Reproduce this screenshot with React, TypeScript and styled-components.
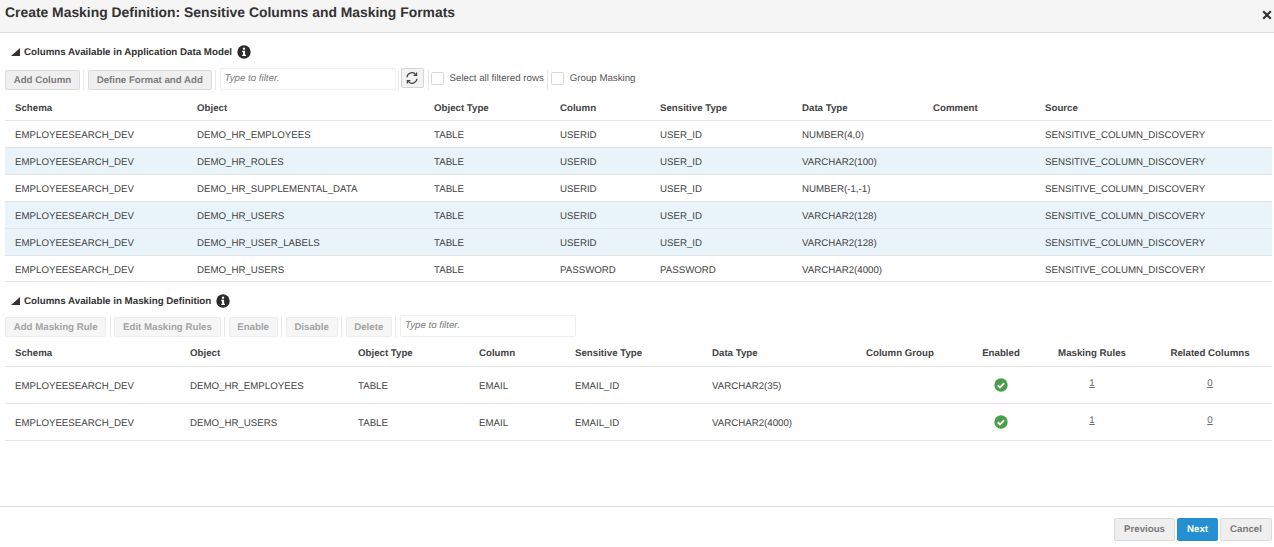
import { createGlobalStyle, styled } from "styled-components";

const GlobalStyle = createGlobalStyle`
  html, body {
    margin: 0;
    padding: 0;
    background: #fff;
    font-family: "Liberation Sans", Arial, sans-serif;
    color: #333;
    text-rendering: geometricPrecision;
  }
  button, input {
    text-rendering: geometricPrecision;
  }
`;

const Dialog = styled.div`
  width: 1274px;
  height: 547px;
  display: flex;
  flex-direction: column;
  overflow: hidden;
  background: #fff;
`;
const Header = styled.header`
  flex: none;
  height: 33px;
  box-sizing: border-box;
  display: flex;
  justify-content: space-between;
  background: #f5f5f5;
  border-bottom: 1px solid #dfdfdf;
  padding: 4px 2px 0 5px;
`;
const Title = styled.h1`
  margin: 0;
  font-size: 13.9px;
  line-height: 17px;
  font-weight: 700;
  color: #333;
`;
const Close = styled.svg`
  margin-top: 6px;
`;
const Body = styled.main`
  flex: 1;
  padding: 0 2px 0 5px;
  min-height: 0;
`;
const SectionTitle = styled.div<{ $top: number }>`
  display: flex;
  align-items: center;
  height: 16px;
  padding-left: 6px;
  margin-top: ${({ $top }) => $top}px;
  font-size: 9.75px;
  font-weight: 700;
  color: #333;
`;
const Triangle = styled.span`
  width: 0;
  height: 0;
  margin-right: 4px;
  border-left: 9px solid transparent;
  border-bottom: 8px solid #333;
`;
const Info = styled.svg`
  margin-left: 5px;
`;
const Toolbar = styled.div<{ $top: number }>`
  display: flex;
  align-items: flex-start;
  height: 22px;
  margin-top: ${({ $top }) => $top}px;
`;
const Button = styled.button<{ $muted?: boolean }>`
  height: 20px;
  margin-top: 2px;
  padding: 0 7.7px;
  border: 1px solid ${({ $muted }) => ($muted ? "#ececec" : "#dcdcdc")};
  border-radius: 2px;
  background: ${({ $muted }) => ($muted ? "#f6f6f6" : "#efefef")};
  color: ${({ $muted }) => ($muted ? "#a4a4a4" : "#7d7d7d")};
  font: 700 9.7px "Liberation Sans", Arial, sans-serif;
  white-space: nowrap;
`;
const Separator = styled.span<{ $left?: number; $right?: number }>`
  flex: none;
  width: 1px;
  height: 20px;
  margin: 2px ${({ $right = 3.5 }) => $right}px 0 ${({ $left = 3.5 }) => $left}px;
  background: #e8e8e8;
`;
const FilterInput = styled.input<{ $width: number }>`
  width: ${({ $width }) => $width}px;
  height: 22px;
  box-sizing: border-box;
  padding: 0 4px 2px;
  border: 1px solid #eeeeee;
  border-radius: 2px;
  background: #fff;
  font: italic 9.7px "Liberation Sans", Arial, sans-serif;
  outline: none;
  &::placeholder {
    color: #777;
    opacity: 1;
  }
`;
const RefreshButton = styled.button`
  width: 23px;
  height: 20px;
  padding: 0;
  display: flex;
  align-items: center;
  justify-content: center;
  border: 1px solid #d5d5d5;
  border-radius: 2px;
  background: #f2f2f2;
`;
const CheckLabel = styled.label`
  display: flex;
  align-items: center;
  height: 20px;
  font-size: 9.7px;
  color: #555;
  white-space: nowrap;
`;
const CheckBox = styled.span`
  width: 13px;
  height: 13px;
  box-sizing: border-box;
  margin-right: 6px;
  border: 1px solid #d9d9d9;
  border-radius: 2px;
  background: #fff;
`;
const TableWrap = styled.div<{ $top: number }>`
  margin-top: ${({ $top }) => $top}px;
`;
const Row = styled.div<{ $cols: string; $height: number; $selected?: boolean; $pad?: number }>`
  display: grid;
  grid-template-columns: ${({ $cols }) => $cols};
  height: ${({ $height }) => $height}px;
  box-sizing: border-box;
  align-items: center;
  padding-top: ${({ $pad = 2 }) => $pad}px;
  border-bottom: 1px solid #e4e4e4;
  background: ${({ $selected }) => ($selected ? "#e9f4fa" : "#fff")};
`;
const HeadCell = styled.div<{ $center?: boolean }>`
  padding-left: ${({ $center }) => ($center ? 0 : 10)}px;
  text-align: ${({ $center }) => ($center ? "center" : "left")};
  font-size: 9.7px;
  font-weight: 700;
  color: #444;
  white-space: nowrap;
`;
const Cell = styled.div<{ $center?: boolean }>`
  display: ${({ $center }) => ($center ? "flex" : "block")};
  justify-content: center;
  padding-left: ${({ $center }) => ($center ? 0 : 10)}px;
  font-size: 9.7px;
  color: #444;
  white-space: nowrap;
`;
const CountLink = styled.a`
  margin-top: -5px;
  color: #666;
  text-decoration: underline;
`;
const EnabledIcon = styled.svg`
  margin-top: -2px;
`;
const Footer = styled.footer`
  flex: none;
  height: 41px;
  box-sizing: border-box;
  display: flex;
  justify-content: flex-end;
  align-items: flex-start;
  gap: 2px;
  padding: 11px 2px 0 0;
  border-top: 1px solid #dcdcdc;
  background: #fff;
`;
const FooterButton = styled.button<{ $primary?: boolean; $width: number }>`
  height: 23px;
  padding: 0;
  width: ${({ $width }) => $width}px;
  border: 1px solid ${({ $primary }) => ($primary ? "#2490d2" : "#dcdcdc")};
  border-radius: 2px;
  background: ${({ $primary }) => ($primary ? "#2490d2" : "#efefef")};
  color: ${({ $primary }) => ($primary ? "#fff" : "#7a7a7a")};
  font: 700 9.7px "Liberation Sans", Arial, sans-serif;
`;

const InfoIcon = () => (
  <Info width="14" height="14" viewBox="0 0 14 14">
    <circle cx="7" cy="7" r="6.7" fill="#2b2b2b" />
    <rect x="5.9" y="2.7" width="2.2" height="2" fill="#fff" />
    <path d="M5.2 5.8h2.9v3.9h.9v1.4H5.2V9.7h.9V7.2h-.9z" fill="#fff" />
  </Info>
);

const CheckIcon = () => (
  <EnabledIcon width="14" height="14" viewBox="0 0 14 14">
    <circle cx="7" cy="7" r="6.7" fill="#4a9f4a" />
    <path d="M3.8 7.3l2.2 2.1 4.2-4.2" fill="none" stroke="#fff" strokeWidth="1.9" />
  </EnabledIcon>
);

const topCols = "182px 237px 126px 100px 142px 131px 112px 237px";
const bottomCols = "175px 168px 121px 96px 137px 154px 116px 58px 124px 112px";

const topHeads = ["Schema", "Object", "Object Type", "Column", "Sensitive Type", "Data Type", "Comment", "Source"];
const topRows = [
  { object: "DEMO_HR_EMPLOYEES", column: "USERID", type: "USER_ID", data: "NUMBER(4,0)", height: 27 },
  { object: "DEMO_HR_ROLES", column: "USERID", type: "USER_ID", data: "VARCHAR2(100)", height: 27, selected: true },
  { object: "DEMO_HR_SUPPLEMENTAL_DATA", column: "USERID", type: "USER_ID", data: "NUMBER(-1,-1)", height: 27 },
  { object: "DEMO_HR_USERS", column: "USERID", type: "USER_ID", data: "VARCHAR2(128)", height: 27, selected: true },
  { object: "DEMO_HR_USER_LABELS", column: "USERID", type: "USER_ID", data: "VARCHAR2(128)", height: 27, selected: true },
  { object: "DEMO_HR_USERS", column: "PASSWORD", type: "PASSWORD", data: "VARCHAR2(4000)", height: 26, pad: 3 },
];
const bottomRows = [
  { object: "DEMO_HR_EMPLOYEES", type: "EMAIL_ID", data: "VARCHAR2(35)" },
  { object: "DEMO_HR_USERS", type: "EMAIL_ID", data: "VARCHAR2(4000)" },
];

export default function App() {
  return (
    <Dialog>
      <GlobalStyle />
      <Header>
        <Title>Create Masking Definition: Sensitive Columns and Masking Formats</Title>
        <Close width="10" height="10" viewBox="0 0 10 10">
          <path d="M1.2 1.2l7.6 7.6M8.8 1.2L1.2 8.8" stroke="#333" strokeWidth="2.2" />
        </Close>
      </Header>
      <Body>
        <SectionTitle $top={11}>
          <Triangle />
          Columns Available in Application Data Model
          <InfoIcon />
        </SectionTitle>
        <Toolbar $top={8}>
          <Button>Add Column</Button>
          <Separator />
          <Button>Define Format and Add</Button>
          <Separator />
          <FilterInput $width={176} placeholder="Type to filter." />
          <Separator $left={2} $right={2} />
          <RefreshButton>
            <svg width="14" height="14" viewBox="0 0 14 14" fill="none" stroke="#444" strokeWidth="1.2">
              <path d="M2 6.2A5 5 0 0 1 11 3.8" />
              <path d="M12 7.8A5 5 0 0 1 3 10.2" />
              <path d="M11.6 1.4v3h-3M2.4 12.6v-3h3" />
            </svg>
          </RefreshButton>
          <Separator $left={4} $right={2} />
          <CheckLabel>
            <CheckBox />
            Select all filtered rows
          </CheckLabel>
          <Separator $left={3} $right={3} />
          <CheckLabel>
            <CheckBox />
            Group Masking
          </CheckLabel>
        </Toolbar>
        <TableWrap $top={5}>
          <Row $cols={topCols} $height={26} $pad={1}>
            {topHeads.map((h) => (
              <HeadCell key={h}>{h}</HeadCell>
            ))}
          </Row>
          {topRows.map((r) => (
            <Row key={r.object + r.column} $cols={topCols} $height={r.height} $selected={r.selected} $pad={r.pad}>
              <Cell>EMPLOYEESEARCH_DEV</Cell>
              <Cell>{r.object}</Cell>
              <Cell>TABLE</Cell>
              <Cell>{r.column}</Cell>
              <Cell>{r.type}</Cell>
              <Cell>{r.data}</Cell>
              <Cell />
              <Cell>SENSITIVE_COLUMN_DISCOVERY</Cell>
            </Row>
          ))}
        </TableWrap>
        <SectionTitle $top={11}>
          <Triangle />
          Columns Available in Masking Definition
          <InfoIcon />
        </SectionTitle>
        <Toolbar $top={6}>
          <Button $muted>Add Masking Rule</Button>
          <Separator />
          <Button $muted>Edit Masking Rules</Button>
          <Separator />
          <Button $muted>Enable</Button>
          <Separator />
          <Button $muted>Disable</Button>
          <Separator />
          <Button $muted>Delete</Button>
          <Separator />
          <FilterInput $width={176} placeholder="Type to filter." />
        </Toolbar>
        <TableWrap $top={2}>
          <Row $cols={bottomCols} $height={28} $pad={2}>
            <HeadCell>Schema</HeadCell>
            <HeadCell>Object</HeadCell>
            <HeadCell>Object Type</HeadCell>
            <HeadCell>Column</HeadCell>
            <HeadCell>Sensitive Type</HeadCell>
            <HeadCell>Data Type</HeadCell>
            <HeadCell>Column Group</HeadCell>
            <HeadCell $center>Enabled</HeadCell>
            <HeadCell $center>Masking Rules</HeadCell>
            <HeadCell $center>Related Columns</HeadCell>
          </Row>
          {bottomRows.map((r) => (
            <Row key={r.object} $cols={bottomCols} $height={37}>
              <Cell>EMPLOYEESEARCH_DEV</Cell>
              <Cell>{r.object}</Cell>
              <Cell>TABLE</Cell>
              <Cell>EMAIL</Cell>
              <Cell>{r.type}</Cell>
              <Cell>{r.data}</Cell>
              <Cell />
              <Cell $center>
                <CheckIcon />
              </Cell>
              <Cell $center>
                <CountLink>1</CountLink>
              </Cell>
              <Cell $center>
                <CountLink>0</CountLink>
              </Cell>
            </Row>
          ))}
        </TableWrap>
      </Body>
      <Footer>
        <FooterButton $width={61}>Previous</FooterButton>
        <FooterButton $primary $width={41}>
          Next
        </FooterButton>
        <FooterButton $width={52}>Cancel</FooterButton>
      </Footer>
    </Dialog>
  );
}
